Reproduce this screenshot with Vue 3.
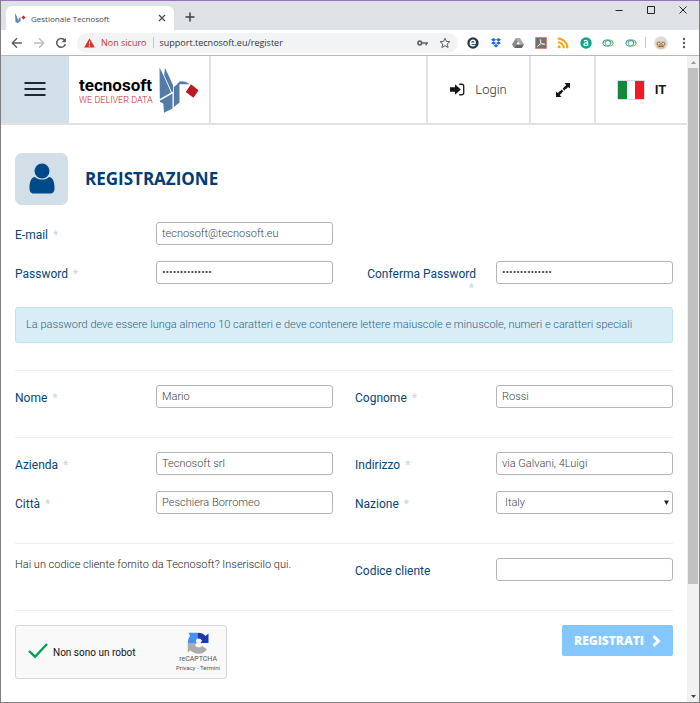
<script setup>
import { reactive } from 'vue'

const form = reactive({
  email: 'tecnosoft@tecnosoft.eu',
  password: 'Tecnosoft#2019',
  confirm: 'Tecnosoft#2019',
  nome: 'Mario',
  cognome: 'Rossi',
  azienda: 'Tecnosoft srl',
  indirizzo: 'via Galvani, 4Luigi',
  citta: 'Peschiera Borromeo',
  nazione: 'Italy',
  codice: ''
})
</script>

<template>
  <div class="window">
    <div class="titlebar">
      <div class="tab">
        <svg class="favicon" viewBox="0 0 12 12"><path d="M1 1l2.500 5 .5 3 1-3 1.500-1v4l-3 2-2-1z" fill="#5b83b0" /><path d="M9.500 3.500l2 2-2 2-2-2z" fill="#d0202e" /></svg>
        <span class="tab-title">Gestionale Tecnosoft</span>
        <button class="plain" type="button" aria-label="Chiudi scheda"><svg width="8" height="8" viewBox="0 0 8 8"><path d="M1 1l6 6M7 1L1 7" stroke="#45494d" stroke-width="1.200" /></svg></button>
      </div>
      <button class="plain new-tab" type="button" aria-label="Nuova scheda"><svg width="10" height="10" viewBox="0 0 10 10"><path d="M5 .5v9M.5 5h9" stroke="#3c4043" stroke-width="1.500" /></svg></button>
      <div class="window-controls">
        <button class="plain" type="button" aria-label="Riduci"><svg width="8" height="8" viewBox="0 0 8 8"><path d="M.5 4.500h7" stroke="#222" /></svg></button>
        <button class="plain" type="button" aria-label="Ingrandisci"><svg width="8" height="8" viewBox="0 0 8 8"><path d="M.5.5h7v7h-7z" fill="none" stroke="#222" /></svg></button>
        <button class="plain" type="button" aria-label="Chiudi"><svg width="8" height="8" viewBox="0 0 8 8"><path d="M.5.5l7 7M7.500.5l-7 7" stroke="#222" /></svg></button>
      </div>
    </div>

    <div class="toolbar">
      <div class="nav">
        <button class="plain" type="button" aria-label="Indietro"><svg width="12" height="12" viewBox="0 0 12 12"><path d="M11 6H1.500M6 1.300L1.300 6 6 10.700" fill="none" stroke="#5a5e63" stroke-width="1.400" /></svg></button>
        <button class="plain" type="button" aria-label="Avanti"><svg width="12" height="12" viewBox="0 0 12 12"><path d="M1 6h9.500M6 1.300L10.700 6 6 10.700" fill="none" stroke="#babcbe" stroke-width="1.400" /></svg></button>
        <button class="plain" type="button" aria-label="Ricarica"><svg width="12" height="12" viewBox="0 0 12 12"><path d="M9.700 3.300A4.400 4.400 0 1 0 10.400 7" fill="none" stroke="#5a5e63" stroke-width="1.500" /><path d="M10.900.8v4.400H6.500z" fill="#5a5e63" /></svg></button>
      </div>
      <div class="omnibox">
        <svg width="11" height="10" viewBox="0 0 11 10"><path d="M5.500.3L10.800 9.500H.2z" fill="#d93025" /><path d="M5.500 3.500v3M5.500 7.300v1.200" stroke="#fff" stroke-width="1.100" /></svg>
        <span class="insecure">Non sicuro</span>
        <span class="bar"></span>
        <span class="url">support.tecnosoft.eu/register</span>
        <svg width="11" height="8" viewBox="0 0 11 8"><circle cx="2.800" cy="4" r="1.900" fill="none" stroke="#5f6368" stroke-width="1.600" /><path d="M4.700 4H11M9.200 4v2.300" stroke="#5f6368" stroke-width="1.600" /></svg>
        <svg width="12" height="12" viewBox="0 0 12 12"><path d="M6 1.200l1.400 3.200 3.500.3-2.700 2.300.9 3.500L6 8.700l-3.100 1.800.9-3.500L1.100 4.700l3.500-.3z" fill="none" stroke="#5a5e63" /></svg>
      </div>
      <div class="extensions">
        <svg viewBox="0 0 12 12"><circle cx="6" cy="6" r="5.700" fill="#263a4c" /><path d="M3.500 6.200h4.700C8.500 4.300 7.400 3.200 6 3.200S3.300 4.300 3.300 6 4.500 8.800 6 8.800c1 0 1.700-.3 2.200-.9" fill="none" stroke="#fff" stroke-width="1.400" /></svg>
        <svg viewBox="0 0 12 12"><g fill="#1464e8"><path d="M3.500 1L6 2.700 3.500 4.400 1 2.700zM8.500 1L11 2.700 8.500 4.400 6 2.700zM3.500 4.400L6 6.100 3.500 7.800 1 6.100zM8.500 4.400L11 6.100 8.500 7.800 6 6.100zM6 7.100l2.300 1.600L6 10.500 3.700 8.700z" /></g></svg>
        <svg viewBox="0 0 12 12"><path d="M4 1h4l4 6.500H8z" fill="#aaa" /><path d="M4 1l2 3.400L2.200 11 0 7.500z" fill="#888" /><path d="M4.200 7.500H12L10 11H2.200z" fill="#666" /></svg>
        <svg viewBox="0 0 12 12"><path d="M.5.5h11v11H.5z" fill="#78706f" stroke="#d98782" /><path d="M2.500 9.500C5 8 6 5.500 5.800 3c-.2-1.300-1-.6-.6.8.6 2.500 2.200 4 4.300 3.800 1-.2.200-1-1-1C6.500 6.500 4 7.500 2.500 9.500z" fill="none" stroke="#eee" stroke-width=".8" /></svg>
        <svg viewBox="0 0 12 12"><circle cx="2.200" cy="9.800" r="1.500" fill="#f9a11b" /><path d="M.8 5.200a6 6 0 0 1 6 6M.8 1.500a9.700 9.700 0 0 1 9.700 9.700" fill="none" stroke="#f9a11b" stroke-width="2" /></svg>
        <svg viewBox="0 0 12 12"><circle cx="6" cy="6" r="5.700" fill="#0ba58c" /><path d="M4 4.200C5 3 7.600 3 7.600 5v3.800M7.600 5.800C5.500 5.600 4 6 4 7.400s2.800 1.700 3.600-.2" fill="none" stroke="#fff" stroke-width="1.300" /></svg>
        <svg v-for="n in 2" :key="n" viewBox="0 0 12 12"><ellipse cx="4.800" cy="6" rx="4" ry="3.200" fill="none" stroke="#2d9fc4" /><ellipse cx="7.200" cy="6" rx="4" ry="3.200" fill="none" stroke="#7fc04b" /><path d="M.8 6q5-4.500 10.400 0" fill="none" stroke="#2479b7" stroke-width=".6" /></svg>
      </div>
      <span class="bar"></span>
      <svg class="avatar" width="14" height="14" viewBox="0 0 14 14"><circle cx="7" cy="7" r="6.800" fill="#dcdcdc" /><path d="M2 7.500C2 5.500 4 5 7 5s5 .5 5 2.500-2 5.500-5 5.500-5-2.500-5-5.500z" fill="#e8c08c" /><path d="M4.500 10.800q2.500-1.500 5 0" fill="none" stroke="#765438" /><circle cx="4.700" cy="7.800" r="1.500" fill="#f3dfbd" stroke="#6a5646" stroke-width=".7" /><circle cx="9.300" cy="7.800" r="1.500" fill="#f3dfbd" stroke="#6a5646" stroke-width=".7" /></svg>
      <button class="plain" type="button" aria-label="Menu del browser"><svg width="4" height="12" viewBox="0 0 4 12"><g fill="#5a5e63"><circle cx="2" cy="2" r="1.200" /><circle cx="2" cy="6" r="1.200" /><circle cx="2" cy="10" r="1.200" /></g></svg></button>
    </div>

    <div class="viewport">
      <div class="page">
        <header class="site-header">
          <button class="cell menu" type="button" aria-label="Menu"><svg width="22" height="16" viewBox="0 0 22 16"><path d="M.5 1h21M.5 7h21M.5 13h21" stroke="#1b2a30" stroke-width="2" /></svg></button>
          <a class="cell logo" href="#">
            <span class="wordmark"><span class="name">tecnosoft</span><span class="tagline">WE DELIVER DATA</span></span>
            <svg width="40" height="46" viewBox="0 0 40 46">
              <path d="M.5.5L4.500 8.500 12 25.500 3.500 30.500.8 32z" fill="#547aa8" />
              <path d="M6 1L14 18v6.500l-1.200.8L5.200 8z" fill="#547aa8" />
              <path d="M1 33.500L3.500 32.200 13.500 26.500V41.500L5 45.800 4.300 36.500 1 35z" fill="#547aa8" />
              <path d="M14.800 25.500V20L20.500 15.500V35.500L14.800 40z" fill="#547aa8" />
              <path d="M17.800 17.200L21 14.200 26.500 14.800 31 17.200z" fill="#547aa8" />
              <path d="M32 17.300L39.500 23.300 34.500 30.800 26.800 25z" fill="#bd1822" />
            </svg>
          </a>
          <span class="spacer"></span>
          <a class="cell login" href="#"><svg width="15" height="13" viewBox="0 0 15 13"><path d="M0 4.300h5V1.200l5.800 5.300L5 11.800V8.700H0z" fill="#151515" /><path d="M9.200 1.200h2.500q2 0 2 2v6.600q0 2-2 2H9.200" fill="none" stroke="#222" stroke-width="1.400" /></svg><span>Login</span></a>
          <button class="cell expand" type="button" aria-label="Schermo intero"><svg width="16" height="16" viewBox="0 0 16 16"><path d="M9.500 1H15V6.500L13.200 4.900 10.800 7.200 8.900 5.300 11.300 3zM6.500 15H1V9.500L2.800 11.100 5.200 8.800 7.100 10.700 4.700 13z" fill="#151515" /><path d="M10.500 5.500L8.400 7.600M7.600 8.400L5.500 10.500" stroke="#151515" stroke-width="2.200" /></svg></button>
          <button class="cell lang" type="button"><svg width="28" height="20" viewBox="0 0 28 20"><path d="M.5.5h27v19H.5z" fill="#fff" stroke="#cfdcea" /><path d="M1 1h9v18H1z" fill="#138a3b" /><path d="M18 1h9v18h-9z" fill="#ed1c24" /></svg><span>IT</span></button>
        </header>

        <main>
          <div class="heading">
            <span class="user-tile"><svg width="26" height="32" viewBox="0 0 26 32"><path d="M6 14C2 14.500.5 19 .5 25c0 4 1.500 5.500 4.500 5.500h16c3 0 4.500-1.500 4.500-5.500 0-6-1.500-10.500-5.500-11-2 1.800-4.200 2.600-7 2.600S8 15.800 6 14z" fill="#004b87" /><circle cx="13" cy="8" r="7.500" fill="#004b87" /></svg></span>
            <h1>REGISTRAZIONE</h1>
          </div>

          <form @submit.prevent>
            <div class="rows">
              <div class="row">
                <div class="field"><label for="email">E-mail <i>*</i></label><input id="email" v-model="form.email" type="email"></div>
              </div>
              <div class="row">
                <div class="field"><label for="password">Password <i>*</i></label><input id="password" v-model="form.password" type="password"></div>
                <div class="field wrap"><label for="confirm">Conferma Password <i>*</i></label><input id="confirm" v-model="form.confirm" type="password"></div>
              </div>
            </div>
            <p class="notice">La password deve essere lunga almeno 10 caratteri e deve contenere lettere maiuscole e minuscole, numeri e caratteri speciali</p>

            <section class="rows">
              <div class="row">
                <div class="field"><label for="nome">Nome <i>*</i></label><input id="nome" v-model="form.nome" type="text"></div>
                <div class="field"><label for="cognome">Cognome <i>*</i></label><input id="cognome" v-model="form.cognome" type="text"></div>
              </div>
            </section>

            <section class="rows">
              <div class="row">
                <div class="field"><label for="azienda">Azienda <i>*</i></label><input id="azienda" v-model="form.azienda" type="text"></div>
                <div class="field"><label for="indirizzo">Indirizzo <i>*</i></label><input id="indirizzo" v-model="form.indirizzo" type="text"></div>
              </div>
              <div class="row">
                <div class="field"><label for="citta">Città <i>*</i></label><input id="citta" v-model="form.citta" type="text"></div>
                <div class="field">
                  <label for="nazione">Nazione <i>*</i></label>
                  <div class="select">
                    <select id="nazione" v-model="form.nazione"><option>Italy</option></select>
                    <svg width="5" height="5" viewBox="0 0 5 5"><path d="M0 .5h5L2.500 5z" fill="#222" /></svg>
                  </div>
                </div>
              </div>
            </section>

            <section class="rows">
              <div class="row">
                <p class="hint">Hai un codice cliente fornito da Tecnosoft? Inseriscilo qui.</p>
                <div class="field"><label for="codice">Codice cliente</label><input id="codice" v-model="form.codice" type="text"></div>
              </div>
            </section>

            <section class="submit">
              <div class="captcha">
                <svg width="20" height="16" viewBox="0 0 20 16"><path d="M1 8l6 5.700L19 1" fill="none" stroke="#009e55" stroke-width="2.400" /></svg>
                <span class="captcha-text">Non sono un robot</span>
                <span class="brand">
                  <svg width="22" height="22" viewBox="0 0 22 22">
                    <path d="M11 .8V6.500C9.500 6.500 9 8 8.800 9L9.800 11H.8C.8 8 1.500 5.800 3 4L1.500.8z" fill="#4a90f2" />
                    <path d="M11 .8c3 0 5.500 1 7.500 3.200L21.500 1.500V11h-8l1.500-2C14.500 7.300 13 6.500 11 6.500z" fill="#1c3aa9" />
                    <path d="M.8 11h9L8 13c.8 1.600 2 2.300 3.700 2.300 1.500 0 2.800-.3 3.800-1.300L20 17.500c-2.200 2.800-5 4.200-8.500 4.200-3.300 0-6-1.200-8-3.500L.8 20.500z" fill="#ababab" />
                  </svg>
                  <span class="brand-name">reCAPTCHA</span>
                  <span class="legal"><a href="#">Privacy</a> - <a href="#">Termini</a></span>
                </span>
              </div>
              <button class="register" type="submit">REGISTRATI <svg width="9" height="12" viewBox="0 0 9 12"><path d="M1.500 1.200L6.500 6l-5 4.800" fill="none" stroke="#fff" stroke-width="3" /></svg></button>
            </section>
          </form>
        </main>
      </div>

      <div class="scrollbar" aria-hidden="true">
        <span class="arrow"><svg width="5" height="3" viewBox="0 0 5 3"><path d="M0 3L2.500 0 5 3z" fill="#999" /></svg></span>
        <span class="thumb"></span>
        <span class="track"></span>
        <span class="arrow"><svg width="5" height="3" viewBox="0 0 5 3"><path d="M0 0h5L2.500 3z" fill="#444" /></svg></span>
      </div>
    </div>
  </div>
</template>

<style>
body { margin: 0; background: #fff; }
</style>

<style scoped>
* { box-sizing: border-box; }
svg { display: block; flex: none; }
button, input, select { font: inherit; margin: 0; }
a { color: inherit; text-decoration: none; }

.window {
  display: flex;
  flex-direction: column;
  box-sizing: border-box;
  min-height: 100vh;
  border: 1px solid #7f7f7f;
  border-top-color: #9673b9;
  background: #fff;
  font-family: Roboto, "Liberation Sans", sans-serif;
  font-size: 11px;
}
.plain { display: flex; padding: 0; border: 0; background: none; }

.titlebar { display: flex; height: 29px; padding-left: 5px; background: #dee1e6; }
.tab {
  display: flex;
  align-items: center;
  align-self: flex-end;
  width: 168px;
  height: 24px;
  padding: 0 8px;
  border-radius: 6px 6px 0 0;
  background: #fff;
}
.favicon { width: 12px; height: 12px; }
.tab-title { flex: 1; padding-left: 5px; font: 8px "Open Sans", sans-serif; color: #45494d; }
.new-tab { align-self: center; margin: 3px 0 0 11px; }
.window-controls { display: flex; gap: 24px; margin-left: auto; padding: 5px 12px 0 0; }
.window-controls .plain { height: 8px; }

.toolbar {
  display: flex;
  align-items: center;
  height: 26px;
  padding: 0 13px 0 10px;
  border-bottom: 1px solid #b8b8b8;
}
.nav { display: flex; gap: 10px; margin-right: 10px; }
.omnibox {
  display: flex;
  flex: 1;
  align-items: center;
  height: 20px;
  padding: 0 7px;
  border-radius: 10px;
  background: #f1f3f4;
  font: 9px "Open Sans", sans-serif;
}
.insecure { margin: 0 6px 0 6px; color: #d93025; }
.bar { width: 1px; height: 11px; background: #c4c7ca; }
.url { flex: 1; padding-left: 6px; color: #333; }
.omnibox svg + svg { margin-left: 11px; }
.extensions { display: flex; justify-content: space-between; width: 170px; margin: 0 8px 0 9px; }
.extensions svg { width: 12px; height: 12px; }
.avatar { margin: 0 14px 0 8px; }

.viewport { display: flex; flex: 1; }
.page { flex: 1; }
.site-header { display: flex; height: 69px; border-bottom: 2px solid #e1e1e1; }
.cell {
  display: flex;
  align-items: center;
  justify-content: center;
  padding: 0;
  border: 0;
  border-left: 2px solid #e1e1e1;
  background: #fff;
  color: #1a1a1a;
}
.menu { width: 68px; border-left: 0; background: #d2dee8; }
.logo { gap: 4px; width: 142px; border-left: 0; border-right: 2px solid #e1e1e1; }
.wordmark { display: flex; flex-direction: column; width: 76px; color: #000; }
.name { font-size: 17px; line-height: 20px; font-weight: 700; }
.tagline { font-size: 9px; line-height: 10px; font-weight: 300; color: #c01e2a; white-space: nowrap; }
.spacer { flex: 1; }
.login { gap: 10px; width: 103px; font-size: 13px; font-weight: 300; color: #333; }
.expand { width: 65px; }
.lang { gap: 10px; width: 93px; font-size: 13px; font-weight: 700; }

main { padding: 28px 14px 16px; }
.heading { display: flex; align-items: center; gap: 17px; margin-bottom: 17px; }
.user-tile {
  display: flex;
  align-items: center;
  justify-content: center;
  width: 53px;
  height: 52px;
  border-radius: 7px;
  background: #d2dee8;
}
h1 { margin: 0; font: bold 17px/20px "Open Sans", sans-serif; color: #003c78; }

.rows { display: flex; flex-direction: column; gap: 16px; }
.row { display: grid; grid-template-columns: 1fr 1fr; gap: 22px; }
.field { display: grid; grid-template-columns: 141px 1fr; align-items: start; }
label { padding: 6px 20px 0 0; font-size: 12px; line-height: 14px; color: #074478; }
label i { margin-left: 2px; font-style: normal; color: #c6d7e5; }
.wrap label { text-align: right; }
.wrap i { display: block; margin-right: 2px; }
input, select {
  width: 100%;
  min-width: 0;
  height: 23px;
  padding: 0 5px;
  border: 1px solid #b5b5b5;
  border-radius: 3px;
  background: #fff;
  font-weight: 300;
  color: #444;
}
select { padding-left: 8px; appearance: none; }
.select { position: relative; }
.select svg { position: absolute; right: 4px; top: 9px; pointer-events: none; }
.notice {
  margin: 12px 0 27px;
  padding: 9px 10px;
  border: 1px solid #bce4ee;
  border-radius: 3px;
  background: #d9edf7;
  line-height: 16px;
  font-weight: 300;
  color: #2d6484;
}
section { padding: 14px 0 29px; border-top: 1px solid #eee; }
.hint { margin: 0; line-height: 14px; font-weight: 300; color: #222; white-space: nowrap; }

.submit { display: flex; align-items: flex-start; justify-content: space-between; padding-bottom: 0; }
.captcha {
  display: flex;
  align-items: center;
  width: 212px;
  height: 54px;
  padding: 0 6px 0 12px;
  border: 1px solid #d6d6d6;
  border-radius: 3px;
  background: #f9f9f9;
}
.captcha svg { margin-bottom: 3px; }
.captcha-text { flex: 1; padding-left: 5px; font-size: 10px; color: #111; }
.brand { display: flex; flex-direction: column; align-items: center; color: #555; }
.brand svg { margin-bottom: 1px; }
.brand-name { font-size: 7px; line-height: 9px; }
.legal { font-size: 6px; line-height: 8px; }
.register {
  display: flex;
  align-items: center;
  justify-content: center;
  gap: 8px;
  width: 111px;
  height: 31px;
  padding: 0;
  border: 0;
  border-radius: 2px;
  background: #84c7ff;
  font: 800 12px "Open Sans", sans-serif;
  color: #fff;
}

.scrollbar { display: flex; flex-direction: column; width: 12px; background: #f1f1f1; }
.arrow { display: flex; align-items: center; justify-content: center; height: 12px; }
.thumb { flex: 83; margin: 0 1px; background: #c1c1c1; }
.track { flex: 17; }
</style>
